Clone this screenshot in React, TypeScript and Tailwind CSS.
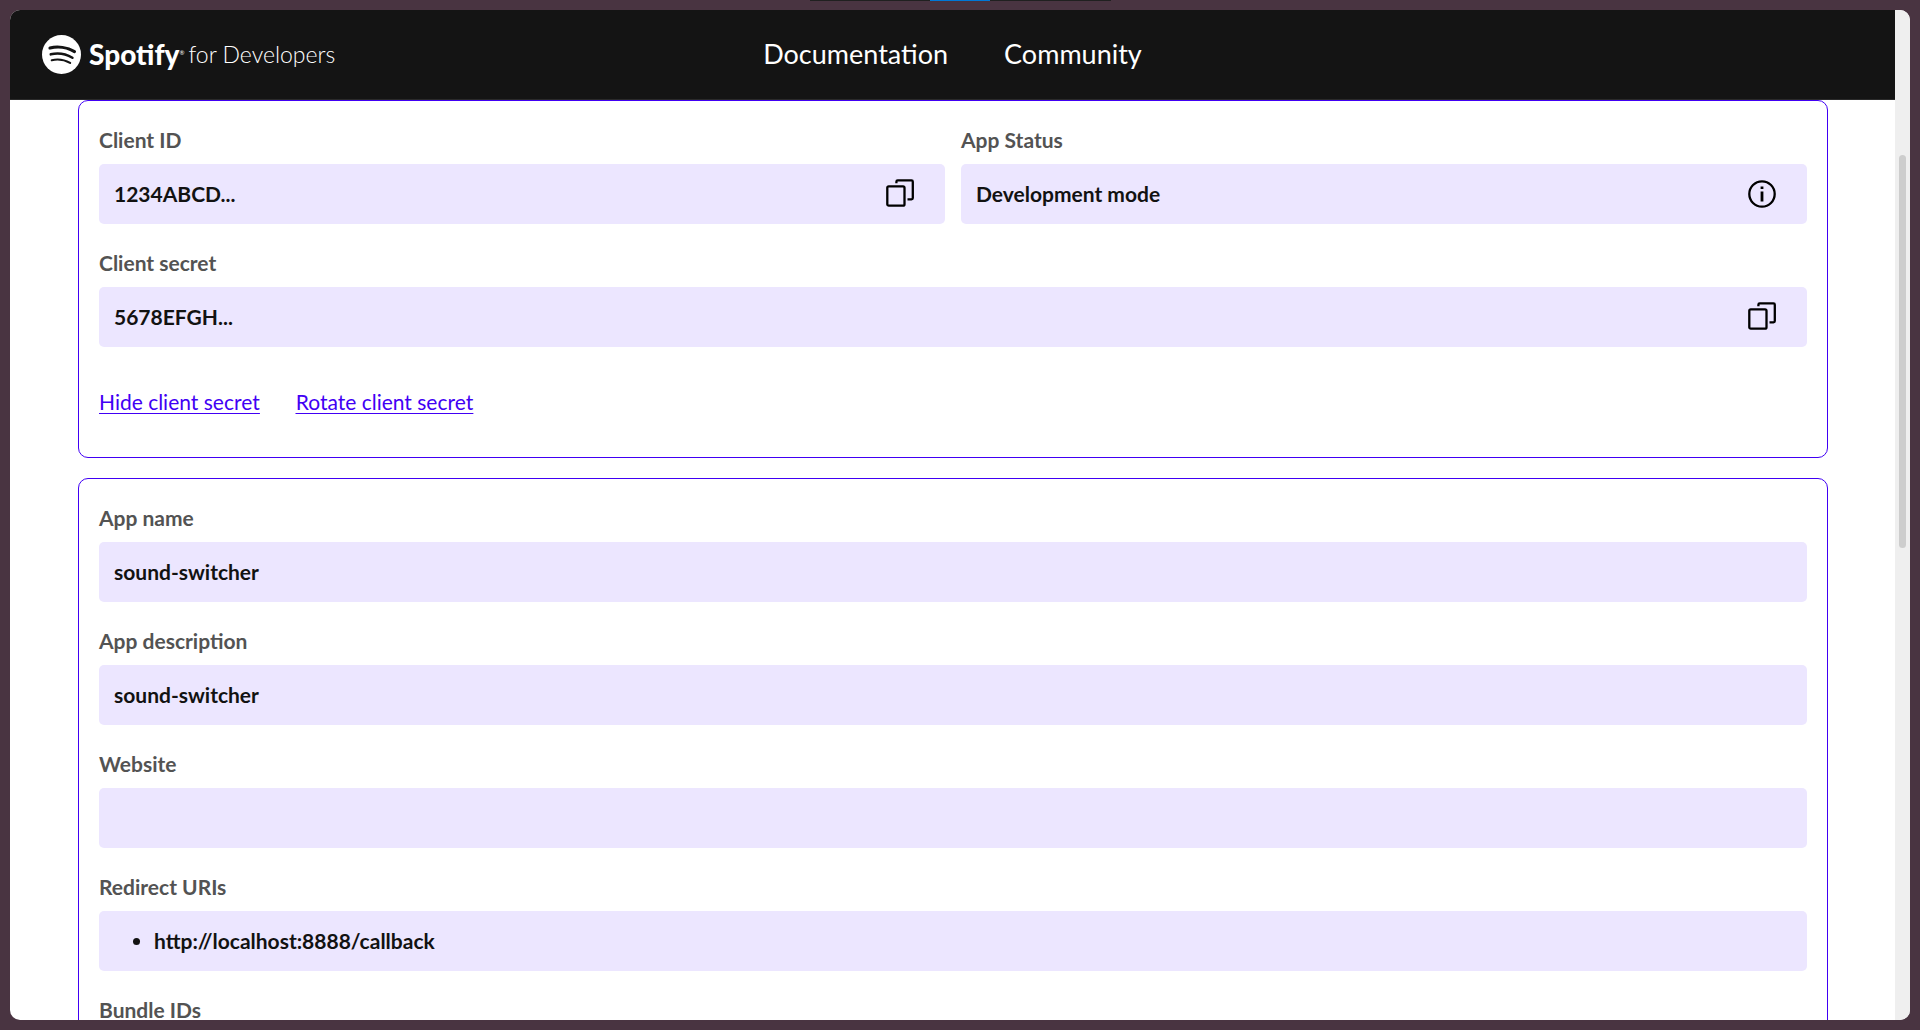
import React from "react";

function CopyIcon() {
  return (
    <svg viewBox="0 0 28 28" className="mb-0.5 size-7" fill="none" stroke="#000" strokeWidth="2.3" aria-hidden="true">
      <rect x="1.3" y="7.3" width="17.2" height="19.4" rx="1.5" />
      <path d="M10.4 4.2V2.7A1.3 1.3 0 0 1 11.7 1.4H25.5a1.3 1.3 0 0 1 1.3 1.3V19a1.3 1.3 0 0 1-1.3 1.3H21.5" />
    </svg>
  );
}

function InfoIcon() {
  return (
    <svg viewBox="0 0 28 28" className="size-7" fill="none" stroke="#000" strokeWidth="2.3" aria-hidden="true">
      <circle cx="14" cy="14" r="12.7" />
      <path d="M14 11.5V21.5M14 6.4V9" strokeWidth="2.8" />
    </svg>
  );
}

function SpotifyMark() {
  return (
    <svg viewBox="0 0 24 24" className="size-[39px] shrink-0" fill="#fff" aria-hidden="true">
      <circle cx="12" cy="12" r="12" />
      <g fill="none" stroke="#141414" strokeLinecap="round">
        <path d="M4.9 8C9.6 6.8 15.6 7.6 20 10.2" strokeWidth="1.9" />
        <path d="M5.4 11.9C9.6 10.9 14.6 11.6 18.7 14" strokeWidth="1.6" />
        <path d="M6 15.5C9.6 14.7 13.8 15.2 17.3 17.2" strokeWidth="1.3" />
      </g>
    </svg>
  );
}

const labelClass = "block text-[21px] leading-6 font-bold text-[#535353]";
const boxClass = "mt-3 flex h-15 items-center rounded-[5px] bg-[#ece6ff] pl-[15px] pr-[31px] text-[21px] leading-6 font-bold text-[#121212]";

function Field({ id, label, value, children }: { id: string; label: string; value: string; children?: React.ReactNode }) {
  return (
    <div className="min-w-0 flex-1">
      <label htmlFor={id} className={labelClass}>{label}</label>
      <div className={boxClass}>
        <input id={id} readOnly defaultValue={value} className="min-w-0 flex-1 bg-transparent outline-none" />
        {children}
      </div>
    </div>
  );
}

function Card({ children }: { children: React.ReactNode }) {
  return (
    <section className="flex shrink-0 flex-col gap-[27px] rounded-[10px] border border-[#4100f4] px-5 pt-[27px] pb-[43px]">
      {children}
    </section>
  );
}

export default function App() {
  return (
    <div className="flex h-screen flex-col bg-[#493441] font-['Lato',sans-serif]">
      <div className="mx-auto flex h-px w-[301px] shrink-0 justify-center bg-[#202020]">
        <div className="h-px w-15 bg-[#0078d7]" />
      </div>
      <div className="mx-2.5 mt-[9px] mb-2.5 flex min-h-0 flex-1 overflow-hidden rounded-[10px] bg-white">
        <div className="flex min-w-0 flex-1 flex-col">
          <header className="grid h-[90px] shrink-0 grid-cols-[1fr_auto_1fr] items-center border-b border-[#2a2a2a] bg-[#141414] text-white">
            <a href="#" className="flex items-center pl-8">
              <SpotifyMark />
              <span className="ml-2 pb-0.5 text-[28px] leading-8 font-black">Spotify</span>
              <span className="mb-1 text-[6px]">®</span>
              <span className="ml-1 pb-0.5 text-[23px] leading-8 font-light">for Developers</span>
            </a>
            <nav className="flex gap-14 pb-0.5 text-[27px] leading-8">
              <a href="#">Documentation</a>
              <a href="#">Community</a>
            </nav>
          </header>
          <main className="flex min-h-0 flex-1 flex-col gap-5 overflow-hidden pr-[67px] pl-17">
            <Card>
              <div className="flex gap-4">
                <Field id="client-id" label="Client ID" value="1234ABCD...">
                  <button type="button" aria-label="Copy client ID"><CopyIcon /></button>
                </Field>
                <Field id="app-status" label="App Status" value="Development mode">
                  <button type="button" aria-label="About app status"><InfoIcon /></button>
                </Field>
              </div>
              <Field id="client-secret" label="Client secret" value="5678EFGH...">
                <button type="button" aria-label="Copy client secret"><CopyIcon /></button>
              </Field>
              <div className="flex gap-9 pt-4 text-[21px] leading-6 text-[#4100f4] underline decoration-1 underline-offset-3">
                <a href="#">Hide client secret</a>
                <a href="#">Rotate client secret</a>
              </div>
            </Card>
            <Card>
              <Field id="app-name" label="App name" value="sound-switcher" />
              <Field id="app-description" label="App description" value="sound-switcher" />
              <Field id="website" label="Website" value="" />
              <div>
                <h2 id="redirect-uris" className={labelClass}>Redirect URIs</h2>
                <div className={boxClass}>
                  <ul aria-labelledby="redirect-uris" className="list-disc pl-10">
                    <li>http://localhost:8888/callback</li>
                  </ul>
                </div>
              </div>
              <h2 className={labelClass}>Bundle IDs</h2>
            </Card>
          </main>
        </div>
        <div className="flex w-[15px] shrink-0 flex-col items-center bg-[#efefef] pt-[145px]">
          <div className="h-[393px] w-[7px] rounded-full bg-[#cdcdcd]" />
        </div>
      </div>
    </div>
  );
}
